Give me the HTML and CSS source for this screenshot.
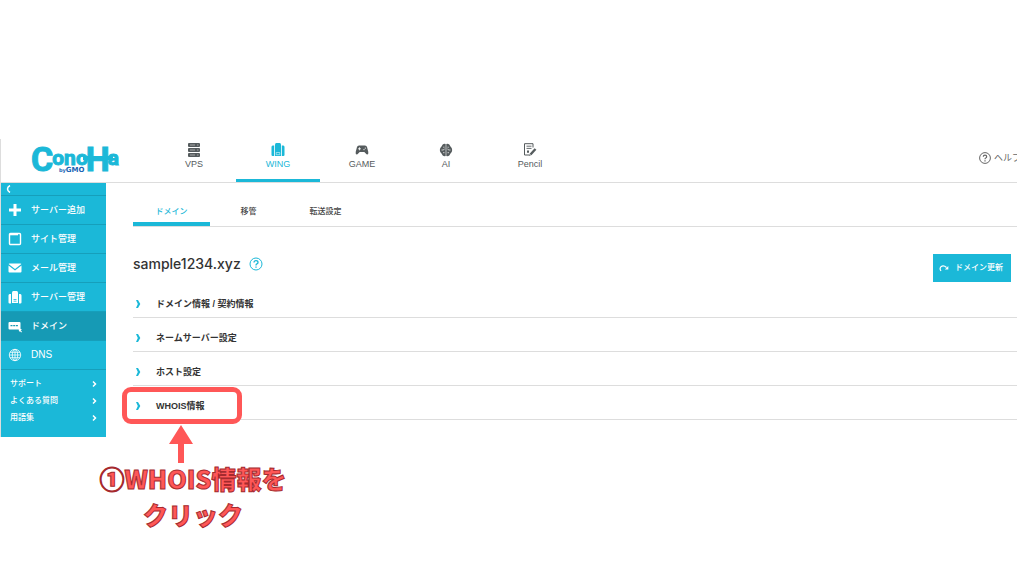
FILE: index.html
```html
<!DOCTYPE html>
<html lang="ja">
<head>
  <meta charset="UTF-8">
  <meta name="viewport" content="width=device-width, initial-scale=1">
  <title>ConoHa WING ドメイン</title>
  <link rel="stylesheet" href="styles.css">
</head>
<body>

  <div class="panel">
    <header class="header">
      <a class="logo" href="#" aria-label="ConoHa by GMO">
        <svg width="96" height="36" viewBox="0 0 96 36">
          <text class="logo-name" x="1" y="27">C<tspan class="logo-small" dx="-1" dy="-6">ono</tspan><tspan dx="-2" dy="6">H</tspan><tspan class="logo-small" dx="-2" dy="-6">a</tspan></text>
          <rect x="53" y="12" width="30" height="4" fill="#1bb8d8"/>
          <text class="logo-gmo" x="29" y="28"><tspan class="logo-by">by</tspan>GMO</text>
        </svg>
      </a>

      <nav class="services">
        <a href="#">
          <svg width="14" height="14" viewBox="0 0 14 14" fill="currentColor">
            <rect x="1" y="0" width="12" height="4" rx="1"/>
            <rect x="1" y="5" width="12" height="4" rx="1"/>
            <rect x="1" y="10" width="12" height="4" rx="1"/>
            <path d="M3 2h5M3 7h5M3 12h5M10 2h1.500M10 7h1.500M10 12h1.500" stroke="#bbb" stroke-width=".8"/>
          </svg>
          VPS
        </a>
        <a href="#" class="active">
          <svg width="14" height="14" viewBox="0 0 14 14" fill="currentColor">
            <path d="M4 1.500Q4 0 5.300 0h3.400Q10 0 10 1.500V13H4z"/>
            <path d="M3.200 2.500V13H1.700Q.5 13 .5 12V4q0-1.500 1.200-1.500zM10.800 2.500V13h1.500q1.200 0 1.200-1V4q0-1.500-1.200-1.500z"/>
            <path d="M5.200 9.500h3.600v2.200H5.200z" fill="none" stroke="#fff" stroke-width=".5"/>
          </svg>
          WING
        </a>
        <a href="#">
          <svg width="14" height="14" viewBox="0 0 14 14" fill="currentColor">
            <path d="M4 2.500h6q1.600 0 2 1.500l1.300 5q.3 2.500-1 2.500-.8 0-1.500-.9L9.300 9H4.700l-1.500 1.600q-.7.900-1.500.900-1.300 0-1-2.500l1.300-5Q2.400 2.500 4 2.500z"/>
            <path d="M4.500 4.300v3M3 5.800h3" stroke="#fff" stroke-width=".8"/>
            <circle cx="9" cy="6.600" r=".6" fill="#fff"/>
            <circle cx="10.300" cy="5.100" r=".6" fill="#fff"/>
          </svg>
          GAME
        </a>
        <a href="#">
          <svg width="14" height="14" viewBox="0 0 14 14" fill="currentColor">
            <path d="M6.700 1v12Q5 13.500 3.700 12.500L2.500 10.500Q.9 9.500.8 7q.1-2.500 1.700-3.500L3.700 1.500Q5 .5 6.700 1zM7.300 1v12q1.700.5 3-.5l1.200-2q1.600-1 1.700-3.500-.1-2.500-1.700-3.500l-1.200-2Q9 .5 7.300 1z"/>
            <path d="M2.500 7h2l1-1.300M4 9.700h1.500M4.200 4.200h1.300M11.500 7h-2l-1-1.300M10 9.700H8.500M9.800 4.200H8.500" fill="none" stroke="#fff" stroke-width=".7"/>
          </svg>
          AI
        </a>
        <a href="#">
          <svg width="14" height="14" viewBox="0 0 14 14" fill="none" stroke="currentColor">
            <path d="M10 4.500V.7H1.500V12H6"/>
            <path d="M3.500 3.200h5M3.500 5.400h5" stroke-width=".9"/>
            <path d="M7.500 11.500l5-5.500" stroke-width="2.400"/>
            <path d="M6 13l.5-2 1.400 1.300zM4 7.500h2v2.300H4z" fill="currentColor" stroke="none"/>
          </svg>
          Pencil
        </a>
      </nav>

      <a class="help" href="#">
        <svg width="12" height="12" viewBox="0 0 12 12" fill="none" stroke="currentColor">
          <circle cx="6" cy="6" r="5.400"/>
          <path d="M4.300 4.800q0-1.600 1.700-1.600t1.700 1.500q0 .9-1 1.300Q6 6.300 6 7.300M6 8.300v1.200" stroke-width="1.200"/>
        </svg>
        ヘルプ
      </a>
    </header>

    <div class="body">
      <aside class="sidebar">
        <button class="collapse" type="button" aria-label="メニューを閉じる">
          <svg width="5" height="8" viewBox="0 0 5 8" fill="none" stroke="currentColor" stroke-width="1.500">
            <path d="M4 .5Q1.500 2 1.500 4T4 7.500"/>
          </svg>
        </button>

        <nav class="menu">
          <a href="#">
            <svg width="14" height="14" viewBox="0 0 14 14" fill="none" stroke="currentColor" stroke-width="3">
              <path d="M7 1v12M1 7h12"/>
            </svg>
            サーバー追加
          </a>
          <a href="#">
            <svg width="14" height="14" viewBox="0 0 14 14" fill="none" stroke="currentColor" stroke-width="1.400">
              <rect x="1.500" y="1.500" width="11" height="11" rx="1"/>
              <path d="M2 2.500h8" stroke-width="1.600"/>
            </svg>
            サイト管理
          </a>
          <a href="#">
            <svg width="14" height="14" viewBox="0 0 14 14" fill="currentColor">
              <path d="M1.500 2.500h11q.7 0 .9.600L7 8 .6 3.100q.2-.6.900-.6z"/>
              <path d="M.5 4.500L7 9.500l6.500-5v6q0 1-1 1h-11q-1 0-1-1z"/>
            </svg>
            メール管理
          </a>
          <a href="#">
            <svg width="14" height="14" viewBox="0 0 14 14" fill="currentColor">
              <path d="M4 2.500Q4 1 5.300 1h3.400Q10 1 10 2.500v10.500H4z"/>
              <path d="M3 4v9.500H1.700q-1.200 0-1.200-1v-7Q.5 4 1.700 4zM11 4v9.500h1.300q1.200 0 1.200-1v-7Q13.500 4 12.300 4z"/>
              <path d="M5.500 9.500h3M5.500 11.200h3" stroke="#1bb8d8" stroke-width=".8"/>
            </svg>
            サーバー管理
          </a>
          <a href="#" class="active">
            <svg width="14" height="14" viewBox="0 0 14 14" fill="currentColor">
              <rect x=".5" y="3" width="12" height="7.500" rx="1"/>
              <path d="M2.500 6.700h8" stroke="#169ab5" stroke-width="1.200" stroke-dasharray="2 .7"/>
              <path d="M10.500 9l3.500 1.500-1.300.7 1.300 1.500-.8.700-1.400-1.500-.7 1z"/>
            </svg>
            ドメイン
          </a>
          <a href="#" class="dns">
            <svg width="14" height="14" viewBox="0 0 14 14" fill="none" stroke="currentColor" stroke-width=".8">
              <circle cx="7" cy="7" r="5.700"/>
              <ellipse cx="7" cy="7" rx="2.700" ry="5.700"/>
              <path d="M7 1.300v11.400M1.300 7h11.400M2 4.300h10M2 9.700h10"/>
            </svg>
            DNS
          </a>
        </nav>

        <nav class="support">
          <a href="#">サポート
            <svg width="5" height="8" viewBox="0 0 5 8"><path d="M1 1.500L3.500 4 1 6.500"/></svg>
          </a>
          <a href="#">よくある質問
            <svg width="5" height="8" viewBox="0 0 5 8"><path d="M1 1.500L3.500 4 1 6.500"/></svg>
          </a>
          <a href="#">用語集
            <svg width="5" height="8" viewBox="0 0 5 8"><path d="M1 1.500L3.500 4 1 6.500"/></svg>
          </a>
        </nav>
      </aside>

      <main class="main">
        <nav class="tabs">
          <a href="#" class="active">ドメイン</a>
          <a href="#">移管</a>
          <a href="#">転送設定</a>
        </nav>

        <div class="title-row">
          <h1>sample1234.xyz</h1>
          <a class="title-help" href="#" aria-label="ヘルプ">
            <svg width="14" height="14" viewBox="0 0 14 14" fill="none" stroke="currentColor">
              <circle cx="7" cy="7" r="6"/>
              <path d="M5 5.500q0-1.800 2-1.800t2 1.700q0 1-1.100 1.500Q7 7.300 7 8.500M7 9.400v1.300" stroke-width="1.300"/>
            </svg>
          </a>
          <button class="renew" type="button">
            <svg width="10" height="8" viewBox="0 0 10 8" fill="none" stroke="currentColor" stroke-width="1.200">
              <path d="M2 7Q.2 4.500 2 2.700 4.500.7 7.500 3.500"/>
              <path d="M9.300 2v3.500H5.800z" fill="currentColor" stroke="none"/>
            </svg>
            ドメイン更新
          </button>
        </div>

        <div class="sections">
          <button type="button">
            <svg width="6" height="8" viewBox="0 0 6 8"><path d="M1 0h2l2.300 4L3 8H1l1.800-4z"/></svg>
            ドメイン情報 / 契約情報
          </button>
          <button type="button">
            <svg width="6" height="8" viewBox="0 0 6 8"><path d="M1 0h2l2.300 4L3 8H1l1.800-4z"/></svg>
            ネームサーバー設定
          </button>
          <button type="button">
            <svg width="6" height="8" viewBox="0 0 6 8"><path d="M1 0h2l2.300 4L3 8H1l1.800-4z"/></svg>
            ホスト設定
          </button>
          <div class="target">
            <button type="button">
              <svg width="6" height="8" viewBox="0 0 6 8"><path d="M1 0h2l2.300 4L3 8H1l1.800-4z"/></svg>
              WHOIS情報
            </button>
            <div class="frame"></div>
          </div>
        </div>
      </main>
    </div>

    <!-- 説明の矢印と文字 -->
    <div class="note">
      <svg width="24" height="38" viewBox="0 0 24 38" fill="#ff5757"><path d="M12 0l12 19h-9v19H9V19H0z"/></svg>
      <p>①WHOIS情報を<br>クリック</p>
    </div>
  </div>

</body>
</html>
```
FILE: styles.css
```css
* {
  box-sizing: border-box;
}

body {
  margin: 0;
  padding: 139px 7px 0 0;
  background: #fff;
  color: #333;
  font-family: "Liberation Sans", "Noto Sans CJK JP", sans-serif;
  font-size: 9px;
  line-height: 12px;
}

a {
  color: inherit;
  text-decoration: none;
}

button {
  border: none;
  font-family: inherit;
  line-height: inherit;
  cursor: pointer;
}

svg {
  display: block;
  flex: none;
}

/* ヘッダー */
.header {
  display: flex;
  height: 44px;
  border-bottom: 1px solid #ddd;
  border-left: 1px solid #ddd;
  overflow: hidden;
}

.logo {
  flex: none;
  width: 151px;
  padding: 5px 0 0 29px;
}

.logo-name {
  fill: #1bb8d8;
  stroke: #1bb8d8;
  stroke-width: 1px;
  font-family: Roboto, sans-serif;
  font-size: 34px;
  font-weight: 700;
}

.logo-small {
  font-size: 21px;
}

.logo-gmo {
  fill: #1764b5;
  font-family: "DejaVu Sans", sans-serif;
  font-size: 7px;
  font-weight: 700;
}

.logo-by {
  font-size: 5px;
}

.services {
  display: flex;
}

.services a {
  display: flex;
  flex-direction: column;
  align-items: center;
  gap: 1px;
  width: 84px;
  padding-top: 4px;
  border-bottom: 3px solid transparent;
  color: #555b5d;
}

.services a.active {
  border-color: #1bb8d8;
  color: #1bb8d8;
}

.help {
  display: flex;
  align-items: center;
  gap: 3px;
  margin: 0 -4px 5px auto;
  color: #666;
  white-space: nowrap;
}

.body {
  display: flex;
  align-items: flex-start;
}

/* サイドバー */
.sidebar {
  flex: none;
  width: 106px;
  border-left: 1px solid #ddd;
  background: #1bb8d8;
  color: #fff;
}

.collapse {
  display: flex;
  align-items: center;
  width: 100%;
  height: 12px;
  padding: 0 5px;
  background: none;
  color: #fff;
}

.menu {
  border-bottom: 1px solid #169fbb;
}

.menu a {
  display: flex;
  align-items: center;
  gap: 9px;
  height: 29px;
  padding-left: 7px;
  border-top: 1px solid #169fbb;
  font-weight: 500;
}

.menu a.active {
  background: #169ab5;
}

.menu a.dns {
  font-size: 10px;
}

.support {
  display: flex;
  flex-direction: column;
  gap: 5px;
  padding: 8px 9px 13px;
  font-size: 8px;
  font-weight: 500;
}

.support a {
  display: flex;
  align-items: center;
  justify-content: space-between;
}

.support path {
  fill: none;
  stroke: #fff;
  stroke-width: 1.5px;
}

/* コンテンツ */
.main {
  flex: 1;
  min-width: 0;
  padding-left: 27px;
}

.tabs {
  display: flex;
  height: 44px;
  border-bottom: 1px solid #ddd;
  color: #444;
  font-size: 8px;
  font-weight: 500;
}

.tabs a {
  width: 77px;
  padding-top: 23px;
  border-bottom: 4px solid transparent;
  text-align: center;
}

.tabs a.active {
  border-color: #1bb8d8;
  color: #1bb8d8;
}

.title-row {
  display: flex;
  align-items: center;
  gap: 8px;
  padding: 27px 6px 2px 0;
}

.title-row h1 {
  margin: 0 0 8px;
  font-family: Inter, sans-serif;
  font-size: 14px;
  font-weight: 500;
  line-height: 20px;
}

.title-help {
  margin-bottom: 8px;
  color: #1bb8d8;
}

.renew {
  display: flex;
  align-items: center;
  gap: 6px;
  height: 28px;
  margin-left: auto;
  padding: 0 8px 0 6px;
  background: #1bb8d8;
  color: #fff;
  font-size: 8px;
  font-weight: 500;
}

.sections button {
  display: flex;
  align-items: center;
  gap: 15px;
  width: 100%;
  height: 34px;
  padding: 6px 0 0 2px;
  border-bottom: 1px solid #ddd;
  background: none;
  color: #333;
  font-size: 9px;
  font-weight: 700;
}

.sections path {
  fill: #1bb8d8;
}

/* 説明 */
.target {
  position: relative;
}

.frame {
  position: absolute;
  top: 1px;
  left: -11px;
  width: 120px;
  height: 37px;
  border: 5px solid #ff5757;
  border-radius: 9px;
  pointer-events: none;
}

.note {
  display: flex;
  flex-direction: column;
  align-items: center;
  width: 222px;
  margin: -12px 0 0 82px;
}

.note svg {
  margin-right: 24px;
}

.note p {
  margin: -3px 0 0;
  color: #ff5757;
  font-family: "Noto Sans CJK JP", sans-serif;
  font-size: 25px;
  font-weight: 900;
  line-height: 36px;
  text-align: center;
  white-space: nowrap;
  -webkit-text-stroke: 1px #a52a2e;
}
```
